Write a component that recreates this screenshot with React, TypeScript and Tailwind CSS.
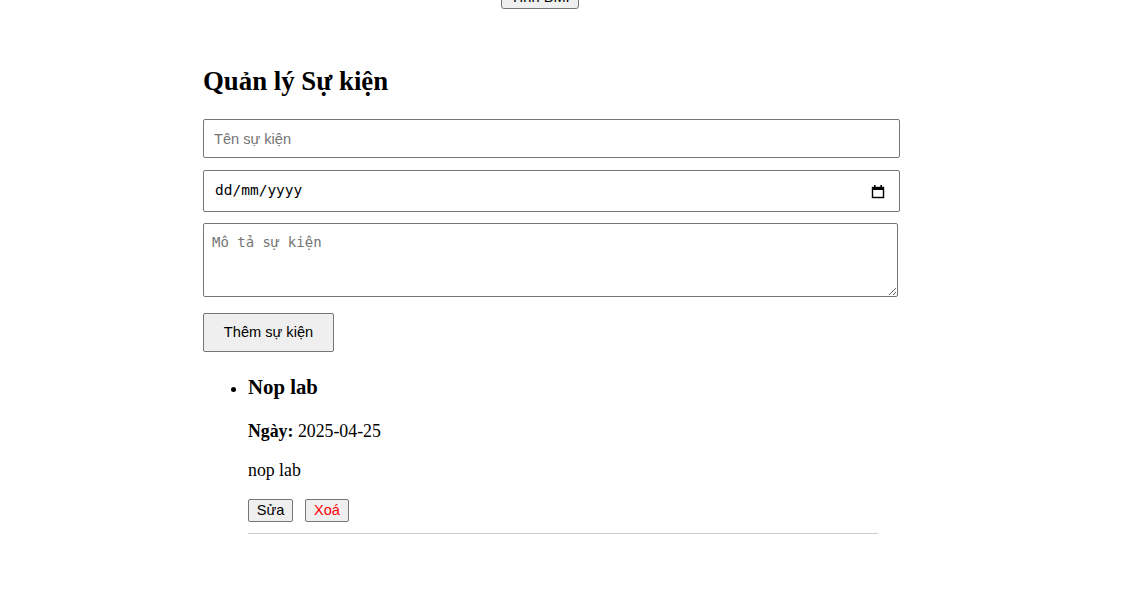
const serif = "font-['Times_New_Roman','Liberation_Serif',serif]";
const sans = "font-['Arial','Liberation_Sans',sans-serif]";
const mono = "font-['DejaVu_Sans_Mono','Liberation_Mono',monospace]";

function CalendarIcon() {
  return (
    <svg width="14" height="15" viewBox="0 0 14 15" className="text-black">
      <rect x="1.5" y="3.5" width="11" height="10" fill="none" stroke="currentColor" strokeWidth="1.4" />
      <rect x="1" y="3" width="12" height="3" fill="currentColor" />
      <rect x="3" y="1" width="1.6" height="3" fill="currentColor" />
      <rect x="9.4" y="1" width="1.6" height="3" fill="currentColor" />
    </svg>
  );
}

const events = [{ id: 1, name: 'Nop lab', date: '2025-04-25', desc: 'nop lab' }];

export default function App() {
  return (
    <div className="w-full min-h-[592px] bg-white text-black overflow-hidden">
      <div className="flex justify-center">
        <button
          className={`${sans} mt-[-15px] ml-[-42px] h-[24px] w-[78px] text-[14.6px] leading-none bg-[#efefef] border border-[#767676] rounded-[3px]`}
        >
          Tính BMI
        </button>
      </div>

      <div className="ml-[203px] w-[697px]">
        <h2 className={`${serif} mt-[58px] text-[26.8px] leading-[28px] font-bold`}>Quản lý Sự kiện</h2>

        <input
          placeholder="Tên sự kiện"
          className={`${sans} mt-[24px] block w-full h-[39px] px-[10px] text-[14.6px] border border-[#767676] rounded-[2px] placeholder:text-[#757575] outline-none`}
        />

        <div className="mt-[12px] flex items-center justify-between h-[42px] w-full pl-[11px] pr-[14px] border border-[#767676] rounded-[2px]">
          <span className={`${mono} text-[14.5px]`}>dd/mm/yyyy</span>
          <CalendarIcon />
        </div>

        <textarea
          placeholder="Mô tả sự kiện"
          className={`${mono} mt-[11px] block w-[695px] h-[74px] px-[8px] py-[9px] text-[14px] leading-[18px] border border-[#767676] rounded-[2px] placeholder:text-[#757575] outline-none`}
        />

        <button
          className={`${sans} mt-[16px] block w-[131px] h-[39px] text-[14.6px] bg-[#efefef] border border-[#767676] rounded-[2px]`}
        >
          Thêm sự kiện
        </button>

        <ul className={`${serif} mt-[23px] pl-[45px] list-disc text-[17.8px]`}>
          {events.map((ev) => (
            <li key={ev.id}>
              <h3 className="text-[20.8px] leading-[24px] font-bold">{ev.name}</h3>
              <p className="mt-[22px] leading-[20px]">
                <strong>Ngày:</strong> {ev.date}
              </p>
              <p className="mt-[19px] leading-[20px]">{ev.desc}</p>
              <div className="mt-[19px] flex gap-[12px]">
                <button className={`${sans} h-[23px] w-[45px] text-[14.6px] leading-none bg-[#efefef] border border-[#767676] rounded-[2px]`}>
                  Sửa
                </button>
                <button className={`${sans} h-[23px] w-[44px] text-[14.6px] leading-none text-[#ff0000] bg-[#efefef] border border-[#767676] rounded-[2px]`}>
                  Xoá
                </button>
              </div>
              <div className="mt-[11px] w-[630px] h-px bg-[#cccccc]" />
            </li>
          ))}
        </ul>
      </div>
    </div>
  );
}
